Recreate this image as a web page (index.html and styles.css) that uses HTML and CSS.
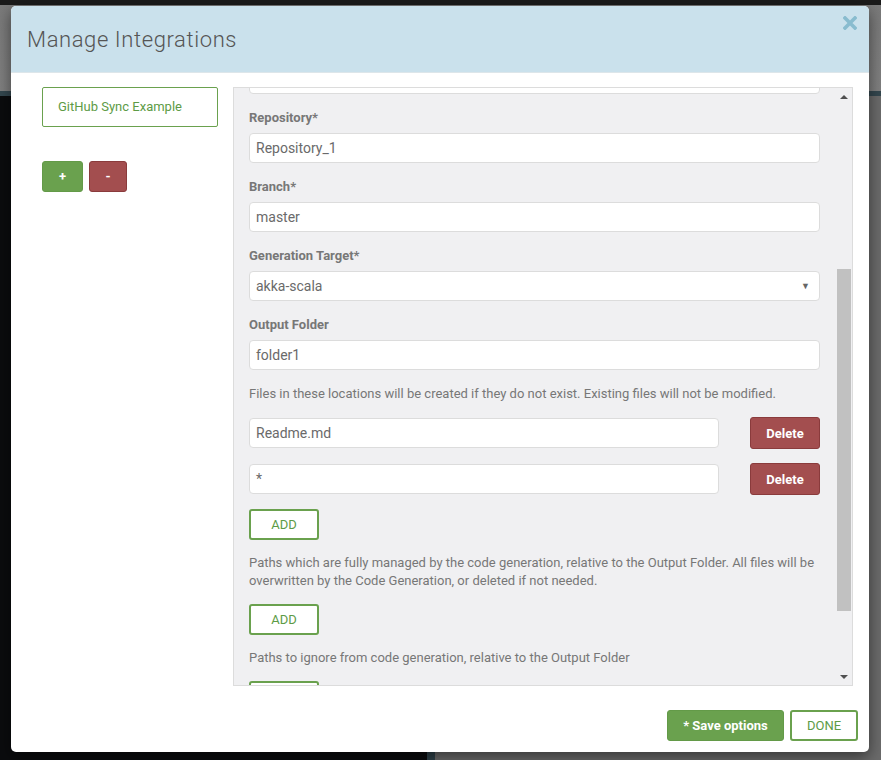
FILE: index.html
```html
<!DOCTYPE html>
<html>
<head>
<meta charset="utf-8">
<link rel="stylesheet" href="styles.css">
</head>
<body>
<div class="backdrop">
  <div class="bd-top"></div>
  <div class="bd-header"></div>
  <div class="bd-line"></div>
  <div class="bd-main">
    <div class="bd-left"></div>
    <div class="bd-sep"></div>
    <div class="bd-right"></div>
  </div>
</div>

<div class="modal">
  <div class="modal-header">
    <h1 class="modal-title">Manage Integrations</h1>
    <svg class="close" width="14" height="14" viewBox="0 0 14 14"><path d="M2 2 L12 12 M12 2 L2 12" stroke="#89bccf" stroke-width="3.6" stroke-linecap="square"/></svg>
  </div>
  <div class="modal-body">
    <div class="side">
      <div class="item">GitHub Sync Example</div>
      <div class="side-btns">
        <button class="btn btn-plus">+</button>
        <button class="btn btn-minus">-</button>
      </div>
    </div>
    <div class="panel">
      <div class="panel-content">
        <div class="field cut"><div class="input"></div></div>
        <div class="field">
          <div class="label">Repository*</div>
          <div class="input">Repository_1</div>
        </div>
        <div class="field">
          <div class="label">Branch*</div>
          <div class="input">master</div>
        </div>
        <div class="field">
          <div class="label">Generation Target*</div>
          <div class="input select">akka-scala<span class="caret">▼</span></div>
        </div>
        <div class="field">
          <div class="label">Output Folder</div>
          <div class="input">folder1</div>
        </div>
        <p class="help">Files in these locations will be created if they do not exist. Existing files will not be modified.</p>
        <div class="row">
          <div class="input grow">Readme.md</div>
          <button class="btn btn-delete">Delete</button>
        </div>
        <div class="row">
          <div class="input grow">*</div>
          <button class="btn btn-delete">Delete</button>
        </div>
        <button class="btn btn-add">ADD</button>
        <p class="help">Paths which are fully managed by the code generation, relative to the Output Folder. All files will be overwritten by the Code Generation, or deleted if not needed.</p>
        <button class="btn btn-add">ADD</button>
        <p class="help">Paths to ignore from code generation, relative to the Output Folder</p>
        <button class="btn btn-add">ADD</button>
      </div>
      <div class="scrollbar">
        <span class="arrow up"></span>
        <div class="track"><div class="thumb"></div></div>
        <span class="arrow down"></span>
      </div>
    </div>
  </div>
  <div class="modal-footer">
    <button class="btn btn-save">* Save options</button>
    <button class="btn btn-done">DONE</button>
  </div>
</div>
</body>
</html>
```

FILE: styles.css
```css
* { box-sizing: border-box; }
html, body { margin: 0; padding: 0; }
body {
  width: 881px;
  height: 760px;
  overflow: hidden;
  position: relative;
  background: #0b0c0e;
  font-family: Roboto, "Liberation Sans", sans-serif;
}

.backdrop { display: flex; flex-direction: column; height: 760px; }
.bd-top { height: 5px; background: #1b1b1b; }
.bd-header { height: 86px; background: linear-gradient(#7a7a7a, #808080); }
.bd-line { height: 5px; background: #34474f; }
.bd-main { flex: 1; display: flex; }
.bd-left { width: 427px; background: #0b0c0e; }
.bd-sep { width: 8px; background: #2f424a; }
.bd-right { flex: 1; background: #6b6b6b; }

.modal {
  position: absolute;
  left: 11px;
  top: 6px;
  width: 858px;
  height: 746px;
  background: #fff;
  border-radius: 5px;
  box-shadow: 0 5px 15px rgba(0,0,0,0.5);
  display: flex;
  flex-direction: column;
  overflow: hidden;
}

.modal-header {
  height: 67px;
  background: #cae1ec;
  border-bottom: 1px solid #dde6ea;
  display: flex;
  align-items: center;
  justify-content: space-between;
  padding: 0 12px 0 16px;
  position: relative;
}
.modal-title {
  margin: 0;
  font-size: 22px;
  font-weight: 300;
  color: #555;
  letter-spacing: 0.6px;
}
.close { position: absolute; right: 12px; top: 10px; }

.modal-body {
  display: flex;
  gap: 15px;
  padding: 14px 16px 0 31px;
}

.side { width: 176px; }
.item {
  height: 40px;
  border: 1px solid #6aa14e;
  border-radius: 2px;
  color: #5d9b46;
  font-size: 13px;
  line-height: 38px;
  padding-left: 15px;
}
.side-btns { display: flex; gap: 6px; margin-top: 34px; }

.btn {
  font-family: Roboto, "Liberation Sans", sans-serif;
  font-size: 13px;
  height: 31px;
  border-radius: 3px;
  border: 1px solid transparent;
  padding: 0;
  cursor: pointer;
}
.btn-plus { width: 41px; background: #6aa14e; border-color: #639a48; color: #fff; font-weight: 700; }
.btn-minus { width: 38px; background: #a34e4f; border-color: #8a3b3c; color: #fff; font-weight: 700; }

.panel {
  width: 620px;
  height: 599px;
  border: 1px solid #dcdcdc;
  background: #f0f0f2;
  display: flex;
  overflow: hidden;
}
.panel-content {
  width: 602px;
  padding: 0 16px 0 15px;
  overflow: hidden;
}
.field { margin-bottom: 15px; }
.field.cut { margin-top: -24px; }
.label {
  font-size: 13px;
  font-weight: 700;
  color: #777;
  line-height: 18px;
  margin-bottom: 6px;
}
.input {
  height: 30px;
  background: #fff;
  border: 1px solid #dcdcdc;
  border-radius: 4px;
  font-size: 14px;
  color: #6a6a6a;
  line-height: 28px;
  padding-left: 6px;
  position: relative;
}
.caret {
  position: absolute;
  right: 9px;
  top: 0;
  font-size: 9px;
  color: #666;
}
.help {
  margin: 0 0 14px;
  font-size: 13px;
  line-height: 18px;
  color: #777;
}
.row { display: flex; align-items: center; gap: 31px; margin-bottom: 14px; }
.grow { flex: 1; }
.btn-delete {
  width: 70px;
  height: 32px;
  background: #a34e4f;
  border-color: #8a3b3c;
  color: #fff;
  font-weight: 700;
}
.btn-add {
  display: block;
  width: 70px;
  height: 31px;
  background: #fff;
  border: 2px solid #6aa14e;
  color: #5d9b46;
  margin-bottom: 14px;
}

.scrollbar {
  width: 16px;
  display: flex;
  flex-direction: column;
  align-items: center;
  padding: 7px 0 6px;
}
.arrow { width: 0; height: 0; border-left: 4px solid transparent; border-right: 4px solid transparent; }
.arrow.up { border-bottom: 4px solid #505050; }
.arrow.down { border-top: 4px solid #505050; }
.track { flex: 1; width: 100%; padding: 170px 1px 64px 1px; display: flex; }
.thumb { flex: 1; background: #c1c1c1; }

.modal-footer {
  display: flex;
  justify-content: flex-end;
  gap: 6px;
  padding: 24px 11px 0 0;
}
.btn-save {
  width: 117px;
  background: #6aa14e;
  border-color: #639a48;
  color: #fff;
  font-weight: 700;
}
.btn-done {
  width: 68px;
  background: #fff;
  border: 2px solid #6aa14e;
  color: #5d9b46;
}
```
